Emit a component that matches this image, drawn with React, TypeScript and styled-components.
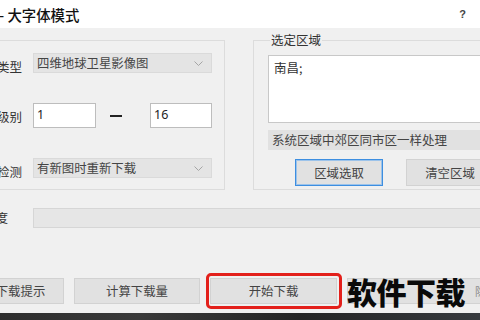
import styled, { createGlobalStyle } from "styled-components";

const GlobalStyle = createGlobalStyle`
  html, body {
    margin: 0;
    padding: 0;
    background: #f0f0f0;
    overflow: hidden;
  }
  body {
    width: 480px;
    height: 320px;
    font-family: "Noto Sans CJK SC", "Noto Sans", sans-serif;
  }
`;

const Window = styled.div`
  width: 480px;
  height: 320px;
  display: flex;
  flex-direction: column;
  overflow: hidden;
  background: #f0f0f0;
  color: #3a3a3a;
`;

const TitleBar = styled.div`
  height: 28px;
  flex: none;
  background: #ffffff;
  display: flex;
  align-items: center;
  justify-content: space-between;
  padding-right: 14px;
`;

const Title = styled.div`
  font-size: 14.4px;
  font-weight: 500;
  color: #111;
  margin-left: -1px;
  white-space: nowrap;
`;

const Help = styled.div`
  font-family: "Liberation Sans", sans-serif;
  font-size: 11px;
  font-weight: bold;
  color: #444;
`;

/* the dialog is cut off on the left in the shot */
const Frame = styled.div`
  flex: 1;
  display: flex;
  flex-direction: column;
  margin-left: -24px;
  width: 540px;
`;

const TopRow = styled.div`
  display: flex;
  align-items: flex-start;
  gap: 28px;
  padding-left: 8px;
`;

const LeftGroup = styled.div`
  margin-top: 12px;
  width: 241px;
  height: 150px;
  box-sizing: border-box;
  border: 1px solid #dcdcdc;
  padding: 12px 12px 0 12px;
`;

const FormGrid = styled.div`
  display: grid;
  grid-template-columns: 36px 179px;
  grid-template-rows: 20px 25px 20px;
  row-gap: 30px;
  align-items: center;
`;

const Label = styled.div<{ $drop?: number }>`
  font-size: 12.5px;
  line-height: 1;
  color: #333;
  white-space: nowrap;
  transform: translateY(${(p) => p.$drop ?? 3}px);
`;

const Select = styled.div`
  height: 20px;
  box-sizing: border-box;
  background: #e4e4e4;
  border: 1px solid #dadada;
  display: flex;
  align-items: center;
  justify-content: space-between;
  padding: 0 8px 0 3px;
  font-size: 12.4px;
  color: #444;
  white-space: nowrap;
`;

const LevelRow = styled.div`
  display: flex;
  align-items: center;
`;

const Input = styled.div<{ $w: number }>`
  width: ${(p) => p.$w}px;
  height: 25px;
  box-sizing: border-box;
  background: #fff;
  border: 1px solid #bdbdbd;
  padding: 3px 0 0 3px;
  font-family: "Noto Sans", sans-serif;
  font-size: 12.5px;
  line-height: 16px;
  color: #222;
`;

const Dash = styled.div`
  width: 12px;
  height: 2px;
  background: #222;
  margin: 0 28px 0 14px;
`;

const RightGroup = styled.fieldset`
  margin: 5px 0 0 0;
  width: 260px;
  min-width: 0;
  box-sizing: border-box;
  border: 1px solid #dcdcdc;
  padding: 8px 0 3px 14px;
`;

const Legend = styled.legend`
  padding: 0 1px;
  margin-left: 2px;
  font-size: 12.5px;
  line-height: 14px;
  color: #333;
`;

const TextBox = styled.div`
  height: 68px;
  box-sizing: border-box;
  background: #fff;
  border: 1px solid #c8c8c8;
  padding: 4px 5px;
  font-size: 12.5px;
  line-height: 16px;
  color: #333;
`;

const InfoField = styled.div`
  margin-top: 7px;
  height: 20px;
  background: #e1e1e1;
  padding-left: 4px;
  font-size: 12.5px;
  line-height: 20px;
  color: #444;
  white-space: nowrap;
`;

const ButtonRow = styled.div`
  margin-top: 9px;
  height: 27px;
  display: flex;
  gap: 23px;
  padding-left: 27px;
`;

const Button = styled.div<{
  $w: number;
  $focus?: boolean;
  $marked?: boolean;
  $indent?: number;
}>`
  position: relative;
  flex: none;
  width: ${(p) => p.$w}px;
  height: 100%;
  box-sizing: border-box;
  background: #e1e1e1;
  border: 1px solid ${(p) => (p.$focus ? "#3d8ee0" : "#d2d2d2")};
  box-shadow: ${(p) => (p.$focus ? "inset 0 0 0 1px #9cc3ea" : "none")};
  display: flex;
  align-items: center;
  justify-content: ${(p) => (p.$indent ? "flex-start" : "center")};
  padding-left: ${(p) => p.$indent ?? 0}px;
  font-size: 12.4px;
  color: #444;
  white-space: nowrap;

  ${(p) =>
    p.$marked &&
    `
    &::after {
      content: "";
      position: absolute;
      left: -5px;
      right: -6px;
      top: -6px;
      bottom: -6px;
      border: 3px solid #e3201b;
      border-radius: 5px;
    }
  `}
`;

const ProgressRow = styled.div`
  margin-top: 18px;
  display: flex;
  align-items: center;
  padding-left: 7px;
`;

const ProgressLabel = styled(Label)`
  width: 50px;
  flex: none;
`;

const ProgressBar = styled.div`
  flex: 1;
  height: 20px;
  box-sizing: border-box;
  background: #e6e6e6;
  border: 1px solid #d6d6d6;
`;

const ButtonBar = styled.div`
  position: relative;
  margin-top: 50px;
  height: 26px;
  display: flex;
  gap: 10px;
  padding-left: 1px;
`;

const Watermark = styled.div`
  position: absolute;
  left: 371px;
  top: -3px;
  font-size: 30px;
  line-height: 32px;
  font-weight: 900;
  color: #0a0a0a;
  letter-spacing: -0.5px;
  white-space: nowrap;
`;

const HiddenLabel = styled.span`
  font-size: 11px;
  color: #8a8a8a;
`;

const Strip = styled.div`
  margin-top: auto;
  height: 7px;
  background: linear-gradient(90deg, #2b2b2b, #3a3a3a 30%, #242424 60%, #3b3f44);
`;

const Chevron = () => (
  <svg width="9" height="5" viewBox="0 0 9 5">
    <path d="M0.5 0.5 L4.5 4.5 L8.5 0.5" fill="none" stroke="#a5a5a5" strokeWidth="1" />
  </svg>
);

export default function App() {
  return (
    <Window>
      <GlobalStyle />
      <TitleBar>
        <Title>- 大字体模式</Title>
        <Help>?</Help>
      </TitleBar>
      <Frame>
        <TopRow>
          <LeftGroup>
            <FormGrid>
              <Label $drop={4}>类型</Label>
              <Select>
                四维地球卫星影像图
                <Chevron />
              </Select>
              <Label $drop={2}>级别</Label>
              <LevelRow>
                <Input $w={63}>1</Input>
                <Dash />
                <Input $w={62}>16</Input>
              </LevelRow>
              <Label $drop={4}>检测</Label>
              <Select>
                有新图时重新下载
                <Chevron />
              </Select>
            </FormGrid>
          </LeftGroup>
          <RightGroup>
            <Legend>选定区域</Legend>
            <TextBox>南昌;</TextBox>
            <InfoField>系统区域中郊区同市区一样处理</InfoField>
            <ButtonRow>
              <Button $w={88} $focus>
                区域选取
              </Button>
              <Button $w={88}>清空区域</Button>
            </ButtonRow>
          </RightGroup>
        </TopRow>
        <ProgressRow>
          <ProgressLabel $drop={0}>进度</ProgressLabel>
          <ProgressBar />
        </ProgressRow>
        <ButtonBar>
          <Button $w={87}>下载提示</Button>
          <Button $w={126}>计算下载量</Button>
          <Button $w={127} $marked>
            开始下载
          </Button>
          <Button $w={200} $indent={127}>
            <HiddenLabel>隐藏窗口</HiddenLabel>
          </Button>
          <Watermark>软件下载</Watermark>
        </ButtonBar>
        <Strip />
      </Frame>
    </Window>
  );
}
